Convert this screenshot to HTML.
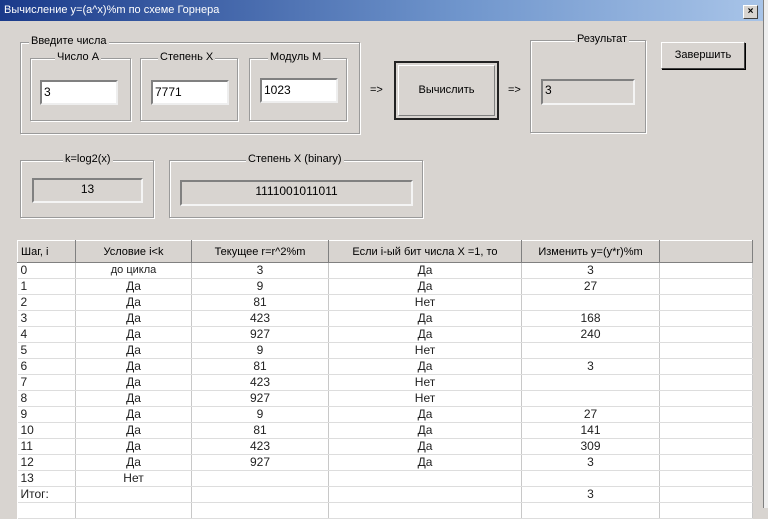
<!DOCTYPE html>
<html><head><meta charset="utf-8"><style>
*{box-sizing:border-box;margin:0;padding:0}
body{width:768px;height:508px;background:#d8d4d0;font-family:"Liberation Sans",sans-serif;font-size:11px;color:#000;position:relative;overflow:hidden}
.a{position:absolute}
.title{left:0;top:0;width:764px;height:21px;background:linear-gradient(90deg,#1a3a8a,#6f95cc 60%,#a8c4e8);color:#fff;font-size:11px;line-height:21px;padding-left:4px}
.close{left:743px;top:5px;width:15px;height:14px;background:#d8d4d0;border:1px solid;border-color:#fff #404040 #404040 #fff;font-size:10px;font-weight:bold;text-align:center;line-height:12px;color:#000}
.redge{left:763px;top:0;width:5px;height:508px;background:#eee;border-left:1px solid #808080}
.grp{border:1px solid #9a9a9a;box-shadow:inset 1px 1px 0 #fff,1px 1px 0 #fff}
.lg{position:absolute;top:-8px;background:#d8d4d0;padding:0 2px;white-space:nowrap}
.inp{background:#fff;border:2px solid;border-color:#808080 #eee #eee #808080;padding-left:2px;font-size:12px;line-height:20px}
.ro{background:#d8d4d0;border:2px solid;border-color:#808080 #f4f4f4 #f4f4f4 #808080;font-size:12px;text-align:center;line-height:19px}
.btn{border:1px solid;border-color:#fff #404040 #404040 #fff;box-shadow:1px 1px 0 #000;text-align:center}
table{border-collapse:collapse;position:absolute;left:17px;top:240px;width:736px;background:#fff;table-layout:fixed}
td{border-right:1px solid #c8c8c8;border-bottom:1px solid #ddd;height:16px;line-height:15px;font-size:12px;text-align:center;padding:0;color:#222}
td:first-child{text-align:left;padding-left:3px}
th{height:22px;background:#d8d4d0;font-weight:normal;font-size:11px;border:1px solid;border-color:#fff #808080 #808080 #fff}
th:first-child{text-align:left;padding-left:3px}
</style></head><body>
<div class="a title">Вычисление y=(a^x)%m по схеме Горнера</div>
<div class="a close">×</div>
<div class="a redge"></div>

<div class="a grp" style="left:20px;top:42px;width:340px;height:92px"><span class="lg" style="left:8px">Введите числа</span></div>
<div class="a grp" style="left:30px;top:58px;width:101px;height:63px"><span class="lg" style="left:24px">Число A</span></div>
<div class="a grp" style="left:140px;top:58px;width:98px;height:63px"><span class="lg" style="left:17px">Степень X</span></div>
<div class="a grp" style="left:249px;top:58px;width:98px;height:63px"><span class="lg" style="left:18px">Модуль M</span></div>
<div class="a inp" style="left:40px;top:80px;width:78px;height:25px">3</div>
<div class="a inp" style="left:151px;top:80px;width:78px;height:25px">7771</div>
<div class="a inp" style="left:260px;top:78px;width:78px;height:25px">1023</div>
<div class="a" style="left:370px;top:84px">=&gt;</div>
<div class="a btn" style="left:394px;top:61px;width:105px;height:59px;border:2px solid #222;box-shadow:none"><div style="margin:2px;height:51px;border:1px solid;border-color:#fff #808080 #808080 #fff;line-height:48px">Вычислить</div></div>
<div class="a" style="left:508px;top:84px">=&gt;</div>
<div class="a grp" style="left:530px;top:40px;width:116px;height:93px"><span class="lg" style="left:44px">Результат</span></div>
<div class="a ro" style="left:541px;top:79px;width:94px;height:26px;text-align:left;padding-left:2px">3</div>
<div class="a btn" style="left:661px;top:42px;width:84px;height:27px;line-height:25px">Завершить</div>

<div class="a grp" style="left:20px;top:160px;width:134px;height:58px"><span class="lg" style="left:42px">k=log2(x)</span></div>
<div class="a ro" style="left:32px;top:178px;width:111px;height:25px">13</div>
<div class="a grp" style="left:169px;top:160px;width:254px;height:58px"><span class="lg" style="left:76px">Степень X (binary)</span></div>
<div class="a ro" style="left:180px;top:180px;width:233px;height:26px">1111001011011</div>

<table>
<colgroup><col style="width:58px"><col style="width:116px"><col style="width:137px"><col style="width:193px"><col style="width:138px"><col></colgroup>
<tr><th>Шаг, i</th><th>Условие i&lt;k</th><th>Текущее r=r^2%m</th><th>Если i-ый бит числа X =1, то</th><th>Изменить y=(y*r)%m</th><th></th></tr>
<tr><td>0</td><td style="font-size:11px">до цикла</td><td>3</td><td>Да</td><td>3</td><td></td></tr>
<tr><td>1</td><td>Да</td><td>9</td><td>Да</td><td>27</td><td></td></tr>
<tr><td>2</td><td>Да</td><td>81</td><td>Нет</td><td></td><td></td></tr>
<tr><td>3</td><td>Да</td><td>423</td><td>Да</td><td>168</td><td></td></tr>
<tr><td>4</td><td>Да</td><td>927</td><td>Да</td><td>240</td><td></td></tr>
<tr><td>5</td><td>Да</td><td>9</td><td>Нет</td><td></td><td></td></tr>
<tr><td>6</td><td>Да</td><td>81</td><td>Да</td><td>3</td><td></td></tr>
<tr><td>7</td><td>Да</td><td>423</td><td>Нет</td><td></td><td></td></tr>
<tr><td>8</td><td>Да</td><td>927</td><td>Нет</td><td></td><td></td></tr>
<tr><td>9</td><td>Да</td><td>9</td><td>Да</td><td>27</td><td></td></tr>
<tr><td>10</td><td>Да</td><td>81</td><td>Да</td><td>141</td><td></td></tr>
<tr><td>11</td><td>Да</td><td>423</td><td>Да</td><td>309</td><td></td></tr>
<tr><td>12</td><td>Да</td><td>927</td><td>Да</td><td>3</td><td></td></tr>
<tr><td>13</td><td>Нет</td><td></td><td></td><td></td><td></td></tr>
<tr><td>Итог:</td><td></td><td></td><td></td><td>3</td><td></td></tr>
<tr><td></td><td></td><td></td><td></td><td></td><td></td></tr>
</table>
</body></html>
